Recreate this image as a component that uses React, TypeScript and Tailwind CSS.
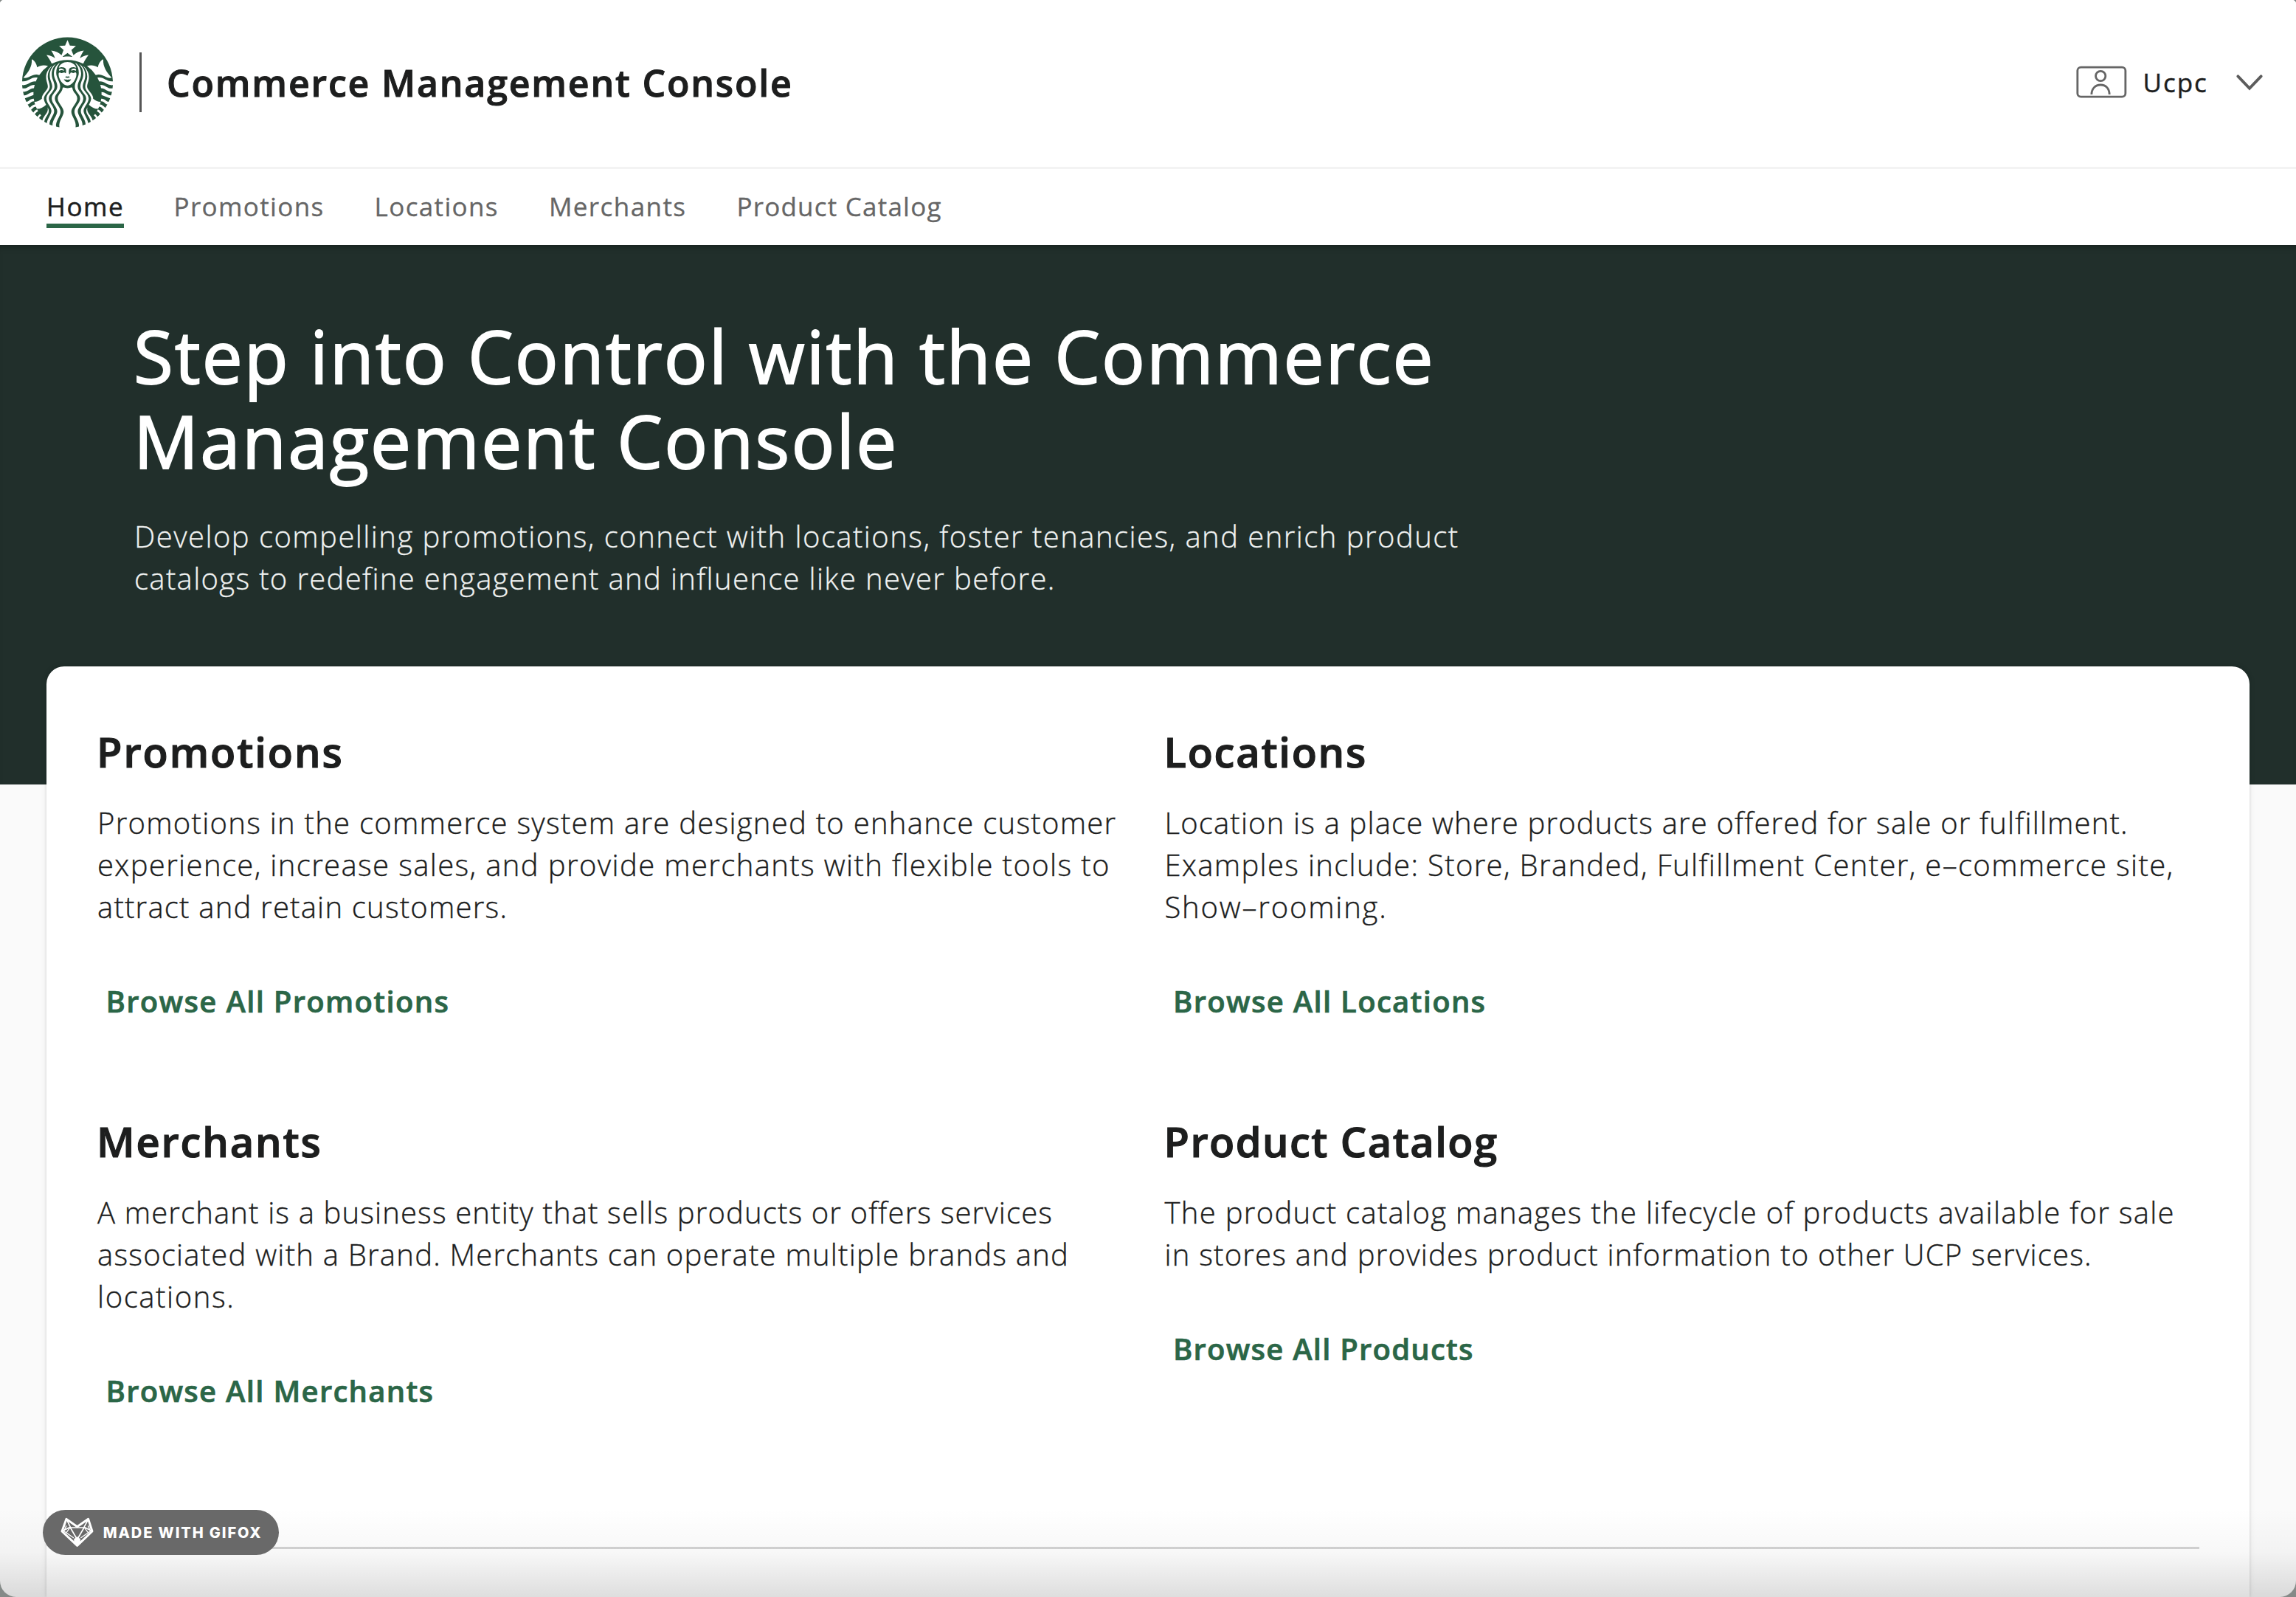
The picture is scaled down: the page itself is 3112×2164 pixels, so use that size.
import type { ReactNode } from 'react';
import { SiStarbucks } from 'react-icons/si';

type Line = { text: string; spacing: string };

const navItems: { label: string; spacing: string }[] = [
  { label: 'Promotions', spacing: 'tracking-[1.37px]' },
  { label: 'Locations', spacing: 'tracking-[1.36px]' },
  { label: 'Merchants', spacing: 'tracking-[1.42px]' },
  { label: 'Product Catalog', spacing: 'tracking-[1.22px]' },
];

type Section = { title: Line; body: Line[]; link: Line };

const sections: Section[] = [
  {
    title: { text: 'Promotions', spacing: 'tracking-[1.95px]' },
    body: [
      { text: 'Promotions in the commerce system are designed to enhance customer', spacing: 'tracking-[1.27px]' },
      { text: 'experience, increase sales, and provide merchants with flexible tools to', spacing: 'tracking-[1.38px]' },
      { text: 'attract and retain customers.', spacing: 'tracking-[1.22px]' },
    ],
    link: { text: 'Browse All Promotions', spacing: 'tracking-[1.33px]' },
  },
  {
    title: { text: 'Locations', spacing: 'tracking-[1.75px]' },
    body: [
      { text: 'Location is a place where products are offered for sale or fulfillment.', spacing: 'tracking-[1.17px]' },
      { text: 'Examples include: Store, Branded, Fulfillment Center, e–commerce site,', spacing: 'tracking-[1.34px]' },
      { text: 'Show–rooming.', spacing: 'tracking-[1.8px]' },
    ],
    link: { text: 'Browse All Locations', spacing: 'tracking-[1.31px]' },
  },
  {
    title: { text: 'Merchants', spacing: 'tracking-[1.85px]' },
    body: [
      { text: 'A merchant is a business entity that sells products or offers services', spacing: 'tracking-[1.15px]' },
      { text: 'associated with a Brand. Merchants can operate multiple brands and', spacing: 'tracking-[1.23px]' },
      { text: 'locations.', spacing: 'tracking-[1.6px]' },
    ],
    link: { text: 'Browse All Merchants', spacing: 'tracking-[1.29px]' },
  },
  {
    title: { text: 'Product Catalog', spacing: 'tracking-[1.45px]' },
    body: [
      { text: 'The product catalog manages the lifecycle of products available for sale', spacing: 'tracking-[1.3px]' },
      { text: 'in stores and provides product information to other UCP services.', spacing: 'tracking-[1.22px]' },
    ],
    link: { text: 'Browse All Products', spacing: 'tracking-[1.23px]' },
  },
];

function TextLine({ spacing, children }: { spacing: string; children: ReactNode }) {
  return <span className={`block whitespace-nowrap ${spacing}`}>{children}</span>;
}

function AccountIcon() {
  return (
    <svg viewBox="100 85 212 140" className="h-[46.7px] w-[70.7px]" fill="none" stroke="#666666" strokeWidth="8.5">
      <rect x="108.5" y="94.5" width="195" height="120" rx="14" />
      <circle cx="202.5" cy="130" r="20" />
      <path d="M165.500 205C166 182 180 166 202.500 166C225 166 238 182 238.500 205" />
    </svg>
  );
}

function ChevronIcon() {
  return (
    <svg viewBox="750 120 114 70" className="h-[23.3px] w-[38px]" fill="none" stroke="#5c5c5c" strokeWidth="11.500" strokeLinecap="round">
      <path d="M760 130L807 179L854 130" />
    </svg>
  );
}

function FoxIcon() {
  return (
    <svg viewBox="246 228 136 122" className="h-[40.7px] w-[45.3px]" fill="none" stroke="#ffffff" strokeLinejoin="round">
      <path d="M270 235L314 266L359 235L375 285L314 343L252 285Z" strokeWidth="9" />
      <path d="M270 234L286 268L251 285M360 234L342 268L376 285M286 270H342L314 318Z" strokeWidth="5" />
      <path d="M270 262L260 284L300 312M358 262L368 284L328 312M270 290L286 268M358 290L342 268" strokeWidth="4" />
      <path d="M302 316L314 308L326 316V332L314 344L302 332Z" fill="#ffffff" strokeWidth="2" />
    </svg>
  );
}

function Header() {
  return (
    <header className="flex h-[229px] shrink-0 items-center border-b-3 border-[#f3f3f3] bg-white pr-[44px] pb-[3px] pl-[30px]">
      <SiStarbucks className="-mt-px size-[123px] shrink-0 text-[#26543c]" />
      <div className="ml-[36px] h-[81px] w-[2.5px] bg-[#555555]" />
      <h1 className="ml-[34.5px] text-[50px] leading-[68px] font-semibold tracking-[1.82px] whitespace-nowrap [-webkit-text-stroke:1px]">
        Commerce Management Console
      </h1>
      <div className="ml-auto flex items-center">
        <AccountIcon />
        <span className="ml-[20.5px] w-[89px] text-[35px] leading-[48px] tracking-[1.94px] [-webkit-text-stroke:0.4px]">Ucpc</span>
        <span className="ml-[36.5px]">
          <ChevronIcon />
        </span>
      </div>
    </header>
  );
}

function Nav() {
  return (
    <nav className="flex h-[103px] shrink-0 items-start gap-[68px] bg-white pt-[27px] pl-[63px] text-[35px] leading-[47px]">
      <a className="w-[104.5px] border-b-6 border-[#2b6647] tracking-[1.58px] [-webkit-text-stroke:0.5px]">Home</a>
      {navItems.map((item) => (
        <a key={item.label} className={`whitespace-nowrap text-[#666666] [-webkit-text-stroke:0.3px] ${item.spacing}`}>
          {item.label}
        </a>
      ))}
    </nav>
  );
}

function Hero() {
  return (
    <section className="h-[731px] shrink-0 bg-[#212f2b] pt-[93px] text-white shadow-[inset_0_8px_8px_-6px_rgba(0,0,0,0.35)]">
      <h2 className="pl-[181px] text-[98px] leading-[115px] [-webkit-text-stroke:1.8px]">
        <TextLine spacing="tracking-[1.98px]">Step into Control with the Commerce</TextLine>
        <TextLine spacing="tracking-[2.15px]">Management Console</TextLine>
      </h2>
      <p className="mt-[43px] pl-[182px] text-[40px] leading-[57px] font-light text-[#f0f2f1] [-webkit-text-stroke:0.3px]">
        <TextLine spacing="tracking-[1.46px]">
          Develop compelling promotions, connect with locations, foster tenancies, and enrich product
        </TextLine>
        <TextLine spacing="tracking-[1.34px]">catalogs to redefine engagement and influence like never before.</TextLine>
      </p>
    </section>
  );
}

function SectionBlock({ title, body, link }: Section) {
  return (
    <article>
      <h3 className={`text-[56px] leading-[76px] font-semibold [-webkit-text-stroke:1.2px] ${title.spacing}`}>{title.text}</h3>
      <p className="mt-[30px] pl-px text-[40px] leading-[57px] font-light [-webkit-text-stroke:0.4px]">
        {body.map((line) => (
          <TextLine key={line.text} spacing={line.spacing}>
            {line.text}
          </TextLine>
        ))}
      </p>
      <a className={`mt-[71px] block pl-[12.5px] text-[40px] leading-[57px] font-semibold whitespace-nowrap text-[#2b6647] [-webkit-text-stroke:0.7px] ${link.spacing}`}>
        {link.text}
      </a>
    </article>
  );
}

export default function App() {
  return (
    <div className="h-[2164px] w-[3112px] overflow-hidden bg-[#858a88]">
      <div className="relative flex h-full flex-col overflow-hidden rounded-t-[5px] rounded-b-[22px] bg-[#fafafa] font-['Open_Sans',sans-serif] text-[#1d1e1e]">
        <Header />
        <Nav />
        <Hero />
        <main className="mx-[63px] -mt-[160px] flex-1 rounded-t-[24px] bg-white px-[68px] pt-[77px] shadow-[0_0_4px_rgba(0,0,0,0.15),0_0_12px_rgba(0,0,0,0.05)]">
          <div className="grid grid-cols-[1446.5px_1fr] grid-rows-[528px_528px]">
            {sections.map((section) => (
              <SectionBlock key={section.title.text} {...section} />
            ))}
          </div>
          <hr className="mt-[60px] border-t-3 border-[#d4d4d4]" />
        </main>
        <div className="absolute inset-x-0 bottom-0 h-[120px] bg-linear-to-b from-transparent via-black/3 to-black/13" />
        <div className="absolute bottom-[57px] left-[57.5px] flex h-[61px] w-[320.5px] items-center rounded-full bg-[#696969] pl-[24px]">
          <FoxIcon />
          <span className="ml-[13px] font-[Inter] text-[20px] leading-[24px] font-extrabold tracking-[1.9px] whitespace-nowrap text-white">
            MADE WITH GIFOX
          </span>
        </div>
      </div>
    </div>
  );
}
